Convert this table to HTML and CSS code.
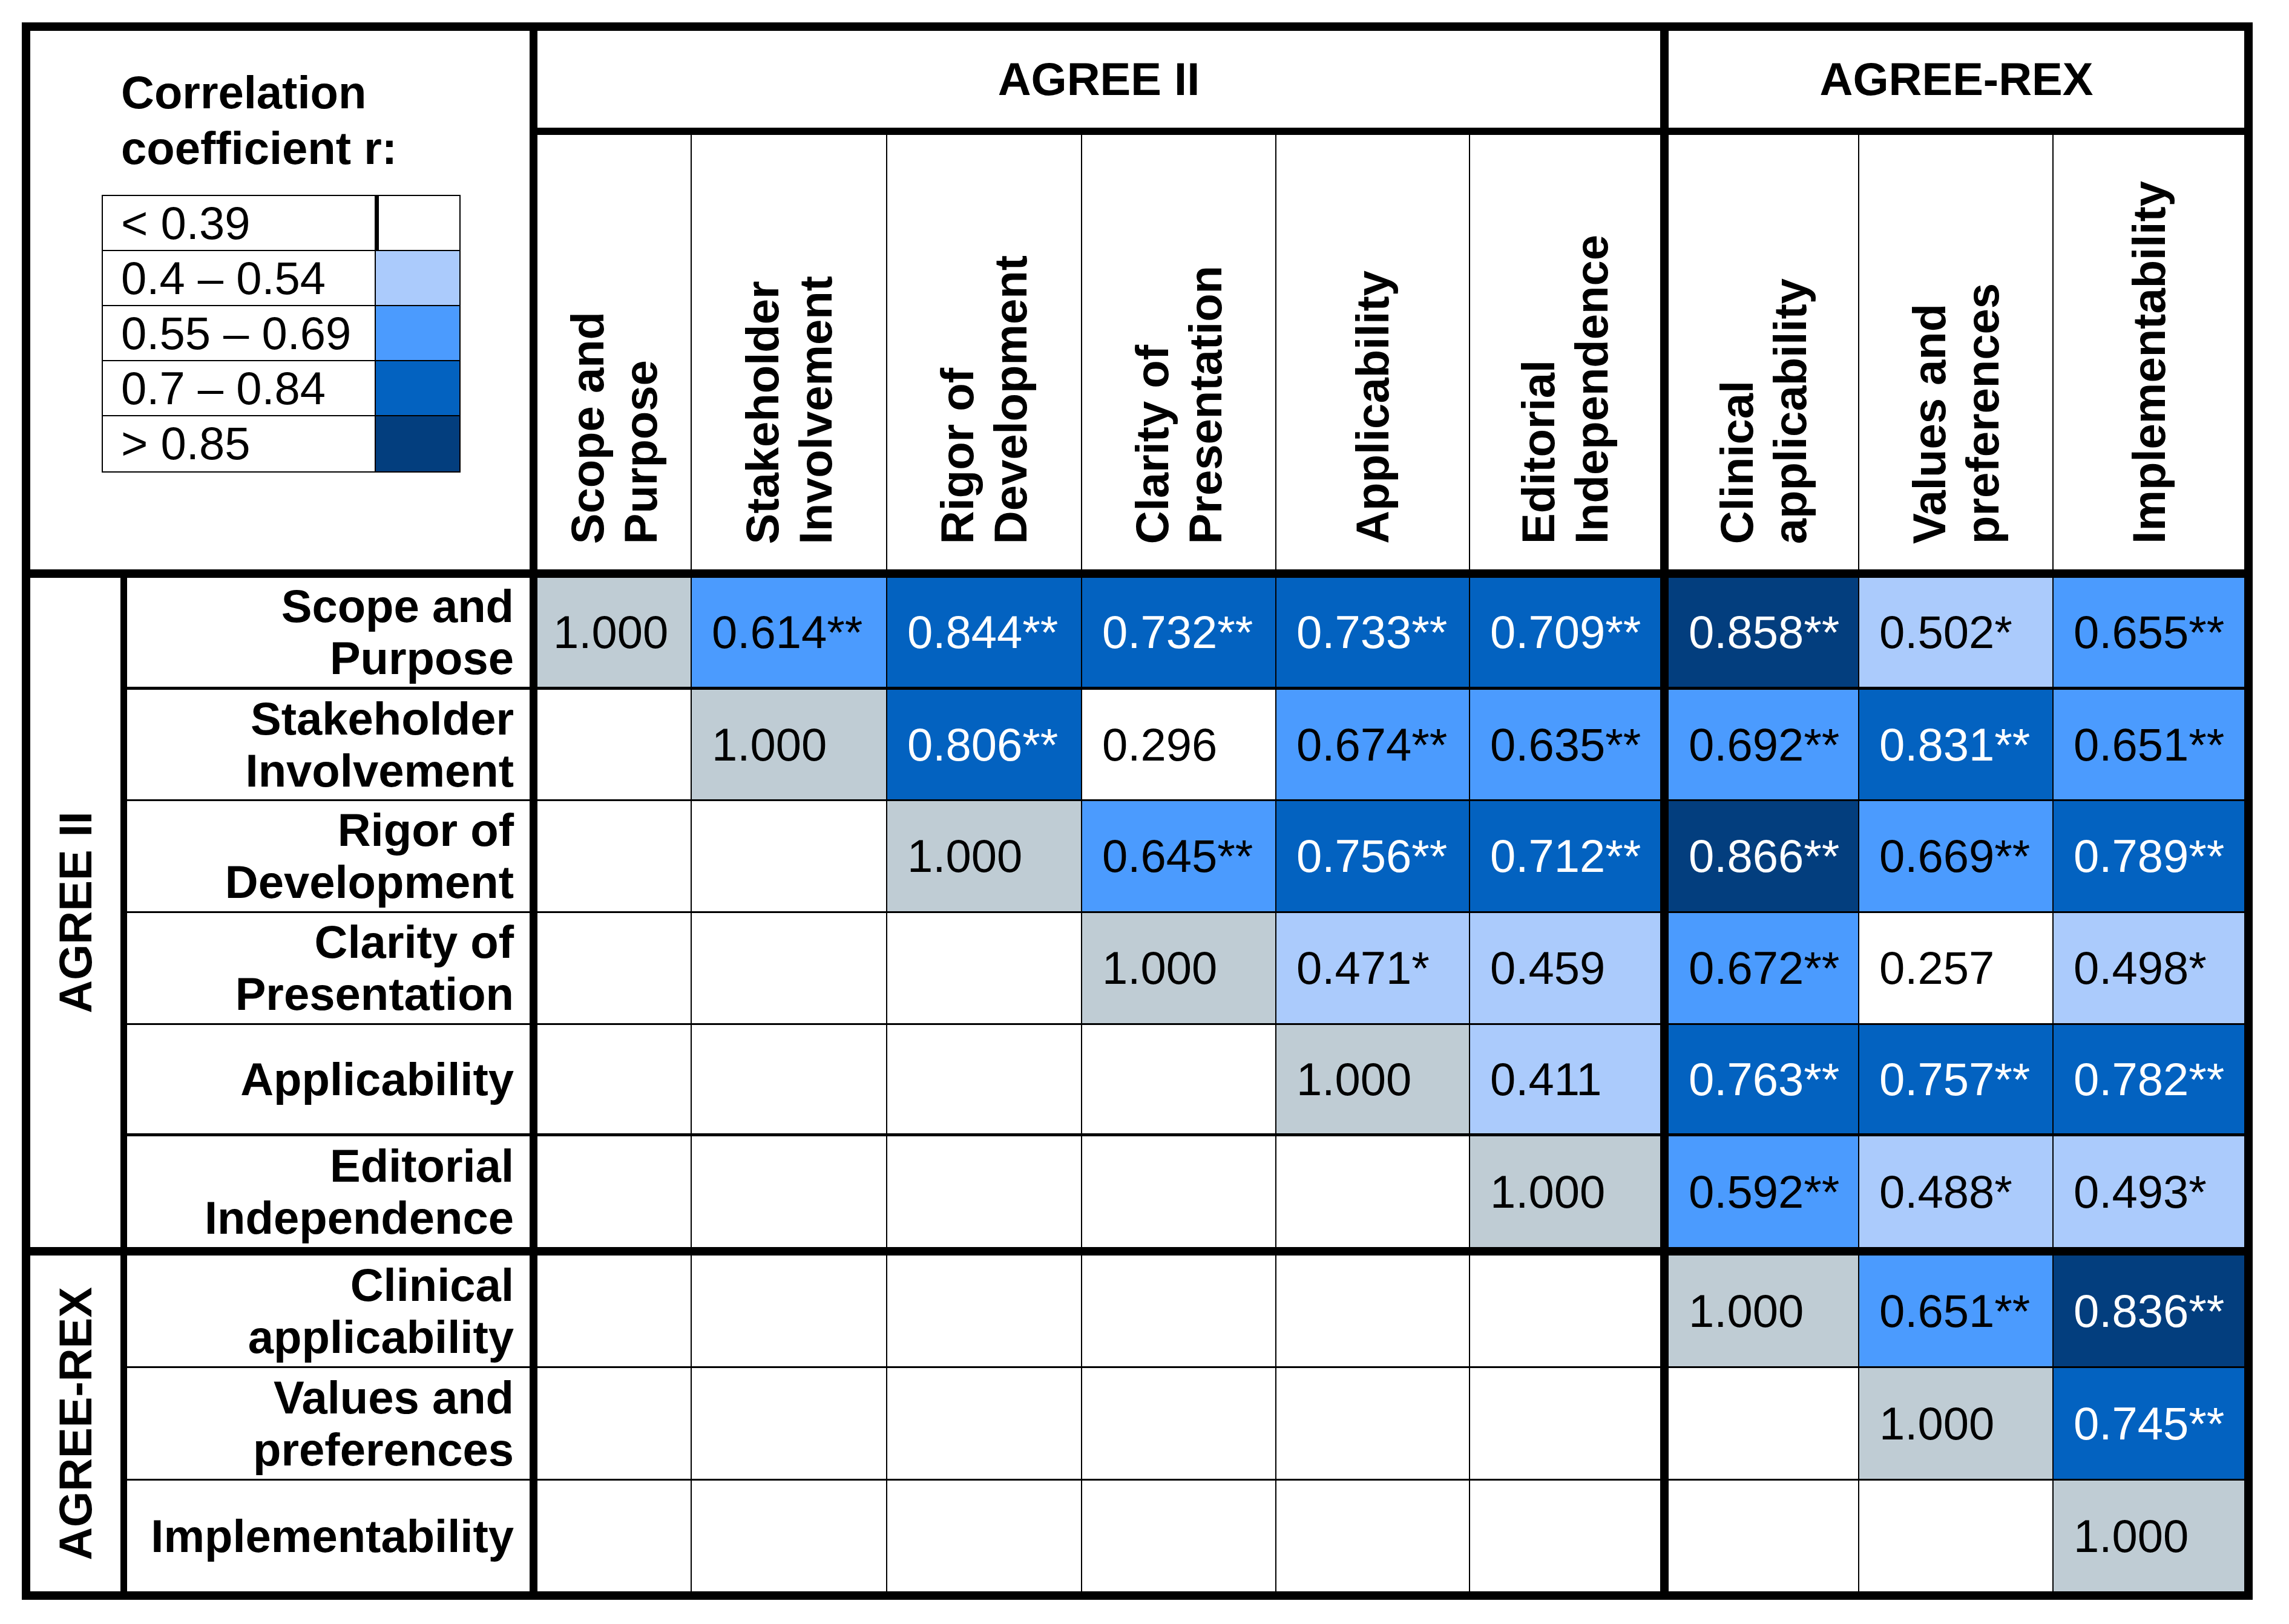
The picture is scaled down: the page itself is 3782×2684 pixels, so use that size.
FILE: index.html
```html
<!DOCTYPE html>
<html lang="en">
<head>
<meta charset="utf-8">
<title>AGREE II / AGREE-REX correlation matrix</title>
<link rel="stylesheet" href="styles.css">
</head>
<body>
<div class="page">
  <div class="matrix">
    <!-- header row 1 -->
    <div class="cell legend-cell">
      <div class="legend-title">Correlation<br>coefficient r:</div>
      <div class="legend">
        <div class="legend-row"><span class="legend-label">&lt; 0.39</span><span class="swatch first"></span></div>
        <div class="legend-row"><span class="legend-label">0.4 – 0.54</span><span class="swatch l2"></span></div>
        <div class="legend-row"><span class="legend-label">0.55 – 0.69</span><span class="swatch l3"></span></div>
        <div class="legend-row"><span class="legend-label">0.7 – 0.84</span><span class="swatch l4"></span></div>
        <div class="legend-row"><span class="legend-label">&gt; 0.85</span><span class="swatch l5"></span></div>
      </div>
    </div>
    <div class="cell group-head">AGREE II</div>
    <div class="cell group-head rex">AGREE-REX</div>

    <!-- header row 2 -->
    <div class="cell col-head"><span class="vt">Scope and<br>Purpose</span></div>
    <div class="cell col-head"><span class="vt">Stakeholder<br>Involvement</span></div>
    <div class="cell col-head"><span class="vt">Rigor of<br>Development</span></div>
    <div class="cell col-head"><span class="vt">Clarity of<br>Presentation</span></div>
    <div class="cell col-head"><span class="vt">Applicability</span></div>
    <div class="cell col-head c6"><span class="vt">Editorial<br>Independence</span></div>
    <div class="cell col-head"><span class="vt">Clinical<br>applicability</span></div>
    <div class="cell col-head"><span class="vt">Values and<br>preferences</span></div>
    <div class="cell col-head c9"><span class="vt">Implementability</span></div>

    <!-- AGREE II rows -->
    <div class="cell group"><span class="vt">AGREE II</span></div>

    <div class="row r1">
      <div class="cell label">Scope and<br>Purpose</div>
      <div class="cell v c1 g">1.000</div>
      <div class="cell v l3">0.614**</div>
      <div class="cell v l4">0.844**</div>
      <div class="cell v l4">0.732**</div>
      <div class="cell v l4">0.733**</div>
      <div class="cell v c6 l4">0.709**</div>
      <div class="cell v l5">0.858**</div>
      <div class="cell v l2">0.502*</div>
      <div class="cell v c9 l3">0.655**</div>
    </div>

    <div class="row r2">
      <div class="cell label">Stakeholder<br>Involvement</div>
      <div class="cell v c1"></div>
      <div class="cell v g">1.000</div>
      <div class="cell v l4">0.806**</div>
      <div class="cell v">0.296</div>
      <div class="cell v l3">0.674**</div>
      <div class="cell v c6 l3">0.635**</div>
      <div class="cell v l3">0.692**</div>
      <div class="cell v l4">0.831**</div>
      <div class="cell v c9 l3">0.651**</div>
    </div>

    <div class="row r3">
      <div class="cell label">Rigor of<br>Development</div>
      <div class="cell v c1"></div>
      <div class="cell v"></div>
      <div class="cell v g">1.000</div>
      <div class="cell v l3">0.645**</div>
      <div class="cell v l4">0.756**</div>
      <div class="cell v c6 l4">0.712**</div>
      <div class="cell v l5">0.866**</div>
      <div class="cell v l3">0.669**</div>
      <div class="cell v c9 l4">0.789**</div>
    </div>

    <div class="row r4">
      <div class="cell label">Clarity of<br>Presentation</div>
      <div class="cell v c1"></div>
      <div class="cell v"></div>
      <div class="cell v"></div>
      <div class="cell v g">1.000</div>
      <div class="cell v l2">0.471*</div>
      <div class="cell v c6 l2">0.459</div>
      <div class="cell v l3">0.672**</div>
      <div class="cell v">0.257</div>
      <div class="cell v c9 l2">0.498*</div>
    </div>

    <div class="row r5">
      <div class="cell label">Applicability</div>
      <div class="cell v c1"></div>
      <div class="cell v"></div>
      <div class="cell v"></div>
      <div class="cell v"></div>
      <div class="cell v g">1.000</div>
      <div class="cell v c6 l2">0.411</div>
      <div class="cell v l4">0.763**</div>
      <div class="cell v l4">0.757**</div>
      <div class="cell v c9 l4">0.782**</div>
    </div>

    <div class="row r6">
      <div class="cell label">Editorial<br>Independence</div>
      <div class="cell v c1"></div>
      <div class="cell v"></div>
      <div class="cell v"></div>
      <div class="cell v"></div>
      <div class="cell v"></div>
      <div class="cell v c6 g">1.000</div>
      <div class="cell v l3">0.592**</div>
      <div class="cell v l2">0.488*</div>
      <div class="cell v c9 l2">0.493*</div>
    </div>

    <!-- AGREE-REX rows -->
    <div class="cell group rex"><span class="vt">AGREE-REX</span></div>

    <div class="row r7">
      <div class="cell label">Clinical<br>applicability</div>
      <div class="cell v c1"></div>
      <div class="cell v"></div>
      <div class="cell v"></div>
      <div class="cell v"></div>
      <div class="cell v"></div>
      <div class="cell v c6"></div>
      <div class="cell v g">1.000</div>
      <div class="cell v l3">0.651**</div>
      <div class="cell v c9 l5">0.836**</div>
    </div>

    <div class="row r8">
      <div class="cell label">Values and<br>preferences</div>
      <div class="cell v c1"></div>
      <div class="cell v"></div>
      <div class="cell v"></div>
      <div class="cell v"></div>
      <div class="cell v"></div>
      <div class="cell v c6"></div>
      <div class="cell v"></div>
      <div class="cell v g">1.000</div>
      <div class="cell v c9 l4">0.745**</div>
    </div>

    <div class="row r9">
      <div class="cell label">Implementability</div>
      <div class="cell v c1"></div>
      <div class="cell v"></div>
      <div class="cell v"></div>
      <div class="cell v"></div>
      <div class="cell v"></div>
      <div class="cell v c6"></div>
      <div class="cell v"></div>
      <div class="cell v"></div>
      <div class="cell v c9 g">1.000</div>
    </div>
  </div>
</div>
</body>
</html>
```

FILE: styles.css
```css
* {
  box-sizing: border-box;
}

html,
body {
  margin: 0;
  background: #ffffff;
}

body {
  font-family: "Liberation Sans", Arial, sans-serif;
  color: #000000;
}

.page {
  padding: 37px 0 0 36px;
}

.matrix {
  display: grid;
  width: max-content;
  grid-template-columns: 160px 678px 255px 323px 322px 321px 320px 328px 315px 321px 315px;
  grid-template-rows: 172px 732px 185px 184px 185px 185px 184px 197px 186px 186px 183px;
  border: 14px solid #000000;
  font-size: 76px;
}

.row {
  display: contents;
}

.cell {
  display: flex;
  align-items: center;
  min-width: 0;
  min-height: 0;
  border-right: 2px solid #000000;
  border-bottom: 3px solid #000000;
  white-space: nowrap;
}

/* ---------- legend ---------- */
.legend-cell {
  grid-column: span 2;
  grid-row: span 2;
  display: block;
  border-right-width: 13px;
  border-bottom-width: 14px;
  padding: 56px 0 0 118px;
}

.legend-title {
  font-weight: 700;
  line-height: 92px;
  padding-left: 32px;
}

.legend {
  margin-top: 31px;
  width: 593px;
  border: 2px solid #000000;
}

.legend-row {
  display: flex;
  height: 91px;
  border-bottom: 2px solid #000000;
}

.legend-row:last-child {
  border-bottom: 0;
}

.legend-label {
  flex: 1;
  padding-left: 30px;
  line-height: 89px;
}

.swatch {
  width: 140px;
  border-left: 2px solid #000000;
}

.swatch.first {
  border-left-width: 7px;
}

/* ---------- headers ---------- */
.group-head {
  grid-column: span 6;
  justify-content: center;
  font-weight: 700;
  line-height: 86px;
  border-right-width: 14px;
  border-bottom-width: 12px;
}

.group-head.rex {
  grid-column: span 3;
  border-right-width: 0;
}

.col-head {
  align-items: flex-end;
  justify-content: center;
  padding-bottom: 42px;
  font-weight: 700;
  border-bottom-width: 14px;
}

.vt {
  writing-mode: vertical-rl;
  transform: rotate(180deg);
  line-height: 88px;
  text-align: start;
}

.group {
  grid-row: span 6;
  justify-content: center;
  font-weight: 700;
  border-right-width: 11px;
  border-bottom-width: 14px;
}

.group.rex {
  grid-row: span 3;
  border-bottom-width: 0;
}

.group .vt {
  line-height: 86px;
}

/* ---------- body ---------- */
.label {
  justify-content: flex-end;
  text-align: right;
  padding-right: 26px;
  font-weight: 700;
  line-height: 86px;
  border-right-width: 13px;
}

.v {
  padding-left: 33px;
  line-height: 86px;
}

.c1 {
  padding-left: 26px;
}

.c6 {
  border-right-width: 14px;
}

.c9 {
  border-right-width: 0;
}

.r1 > .cell,
.r5 > .cell {
  border-bottom-width: 5px;
}

.r6 > .cell {
  border-bottom-width: 14px;
}

.r9 > .cell {
  border-bottom-width: 0;
}

/* ---------- colour scale ---------- */
.g {
  background: #bfccd4;
}

.l2 {
  background: #abcbfc;
}

.l3 {
  background: #4b9bfe;
}

.l4 {
  background: #0362c0;
  color: #ffffff;
}

.l5 {
  background: #033e7e;
  color: #ffffff;
}
```
